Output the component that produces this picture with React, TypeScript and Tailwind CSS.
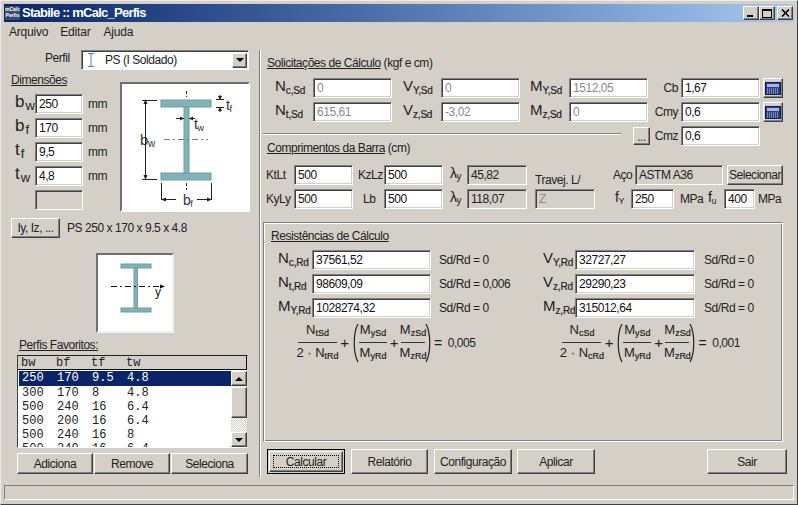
import React from "react";

const raised = "border border-t-white border-l-white border-r-[#404040] border-b-[#404040] shadow-[inset_-1px_-1px_0_#808080] bg-[#d4d0c8]";

function Field({ w, v = "", kind = "edit" }: { w: string; v?: string; kind?: "edit" | "off" | "ro" | "grey" }) {
  const tone =
    kind === "edit" ? "bg-white text-[#111]" :
    kind === "off" ? "bg-white text-[#8a8a8a]" :
    kind === "grey" ? "bg-[#d4d0c8] text-[#8a8a8a]" :
    "bg-[#d4d0c8] text-[#222]";
  return (
    <div className={`${w} h-[20px] shrink-0 border border-t-[#808080] border-l-[#808080] border-r-white border-b-white shadow-[inset_1px_1px_0_#404040,inset_-1px_-1px_0_#d4d0c8] pl-[3px] leading-[18px] overflow-hidden whitespace-nowrap ${tone}`}>
      {v}
    </div>
  );
}

function Btn({ w, h = "h-[25px]", children }: { w: string; h?: string; children: React.ReactNode }) {
  return <div className={`${w} ${h} ${raised} shrink-0 flex items-center justify-center whitespace-nowrap`}>{children}</div>;
}

function Q({ b, s }: { b: string; s: string }) {
  return (
    <span className="whitespace-nowrap text-[#222] tracking-normal">
      <span className="text-[15px] tracking-[-1px]">{b}</span>
      <span className="text-[10px] tracking-[-0.2px] text-[#222] align-[-3px] ml-[1px] [-webkit-text-stroke:0.2px_#222]">{s}</span>
    </span>
  );
}

function Dim({ b, s, v }: { b: string; s: string; v: string }) {
  return (
    <div className="flex items-center h-[20px] mb-[4px]">
      <div className="w-[31px] pl-[11px] whitespace-nowrap text-[#222] tracking-normal">
        <span className="text-[17px]">{b}</span>
        <span className="text-[13px] align-[-3px] ml-[1px]">{s}</span>
      </div>
      <Field w="w-[48px]" v={v} />
      <span className="ml-[5px]">mm</span>
    </div>
  );
}

function MainBeam() {
  return (
    <svg width="126" height="126" viewBox="122 84 126 126" className="block">
      <rect x="161" y="100" width="50" height="7" fill="#7fb3b8" stroke="#6f9ea2" />
      <rect x="161" y="173" width="50" height="7" fill="#7fb3b8" stroke="#6f9ea2" />
      <rect x="184" y="107" width="5" height="66" fill="#7fb3b8" stroke="#6f9ea2" />
      <g stroke="#222" strokeWidth="1" fill="none">
        <path d="M186.5 91v6M186.5 183v7" strokeDasharray="3 2" />
        <path d="M164 139.5h44" stroke="#777" strokeDasharray="6 3 2 3" />
        <path d="M142 100.5h15M142 179.5h15M145.5 101v78" />
        <path d="M216 99.5h8M216 107.5h8M220 95v4M220 108v4" />
        <path d="M176 118.5h8M189 118.5h6" />
        <path d="M161.5 183v17M211.5 183v17M162 199.5h14M197 199.5h14" />
      </g>
      <g fill="#222">
        <path d="M145.5 99l-2 5h4zM145.5 180l-2-5h4zM220 100l-2-4h4zM220 107l-2 4h4zM184 118.5l-4-2v4zM189 118.5l4-2v4zM161 199.5l5-2v4zM212 199.5l-5-2v4z" />
      </g>
      <text x="140" y="145" fontSize="15" fill="#333" fontFamily="Liberation Sans">b<tspan fontSize="10" dy="2">w</tspan></text>
      <text x="226" y="110" fontSize="14" fill="#333" fontFamily="Liberation Sans">t<tspan fontSize="9" dy="2">f</tspan></text>
      <text x="194" y="129" fontSize="14" fill="#333" fontFamily="Liberation Sans">t<tspan fontSize="9" dy="2">w</tspan></text>
      <text x="183" y="205" fontSize="14" fill="#333" fontFamily="Liberation Sans">b<tspan fontSize="9" dy="2">f</tspan></text>
    </svg>
  );
}

function SmallBeam() {
  return (
    <svg width="74" height="76" viewBox="98 255 74 76" className="block">
      <rect x="121" y="264" width="30" height="4" fill="#7fb3b8" stroke="#6f9ea2" />
      <rect x="121" y="308" width="30" height="4" fill="#7fb3b8" stroke="#6f9ea2" />
      <rect x="134" y="268" width="3.5" height="40" fill="#7fb3b8" stroke="#6f9ea2" />
      <path d="M111 286.5h51" stroke="#111" strokeDasharray="6 3 2 3" />
      <path d="M165 286.5l-5-2v4z" fill="#111" />
      <text x="155" y="296" fontSize="12" fill="#222" fontFamily="Liberation Sans">y</text>
    </svg>
  );
}

function CalcIcon() {
  return (
    <div className={`w-[20px] h-[20px] ml-[3px] shrink-0 ${raised} flex items-center justify-center`}>
      <svg width="16" height="13" viewBox="0 0 16 13">
        <rect x="0.5" y="0.5" width="15" height="12" fill="#27408b" stroke="#111a55" />
        <rect x="2" y="2" width="12" height="3" fill="#a9b4d8" />
        <path d="M2 7h12M2 9h12M2 11h12" stroke="#c4c8d4" strokeDasharray="1 1" />
      </svg>
    </div>
  );
}

function Frac({ t, b, w }: { t: React.ReactNode; b: React.ReactNode; w: string }) {
  return (
    <div className={`${w} shrink-0 flex flex-col items-center`}>
      <div className="h-[20px] flex items-end leading-[18px] border-b border-[#333] w-full justify-center whitespace-nowrap">{t}</div>
      <div className="h-[20px] leading-[20px] whitespace-nowrap">{b}</div>
    </div>
  );
}

function F({ b, s }: { b: string; s: string }) {
  return (
    <span className="text-[#222] tracking-normal">
      <span className="text-[13px]">{b}</span>
      <span className="text-[9px] align-[-2px] [-webkit-text-stroke:0.2px_#222]">{s}</span>
    </span>
  );
}

function Paren({ flip = false }: { flip?: boolean }) {
  return (
    <svg width="7" height="40" viewBox="0 0 7 40" className={`shrink-0 ${flip ? "-scale-x-100" : ""}`}>
      <path d="M6 1C1 10 1 30 6 39" fill="none" stroke="#222" strokeWidth="1.2" />
    </svg>
  );
}

function Formula({ n, value, box }: { n: string; value: string; box: string }) {
  return (
    <div className={`flex items-center h-[40px] ${box} text-[13px]`}>
      <Frac w="w-[39px]" t={<F b="N" s={`${n}Sd`} />} b={<span className="text-[13px] tracking-normal">2 · <F b="N" s={`${n}Rd`} /></span>} />
      <span className="w-[15px] text-center text-[15px]">+</span>
      <Paren />
      <Frac w="w-[28px]" t={<F b="M" s="ySd" />} b={<F b="M" s="yRd" />} />
      <span className="w-[14px] text-center text-[15px]">+</span>
      <Frac w="w-[24px]" t={<F b="M" s="zSd" />} b={<F b="M" s="zRd" />} />
      <Paren flip />
      <span className="ml-[2px] text-[14px]">=</span>
      <span className="ml-[6px] text-[12px]">{value}</span>
    </div>
  );
}

function ResRow({ l1, s1, v1, r1, l2, s2, v2 }: { l1: string; s1: string; v1: string; r1: string; l2: string; s2: string; v2: string }) {
  return (
    <div className="flex items-center h-[20px] mb-[4px]">
      <div className="w-[47px] pl-[13px]"><Q b={l1} s={s1} /></div>
      <Field w="w-[119px]" v={v1} />
      <div className="w-[104px] pl-[8px]">{r1}</div>
      <div className="w-[40px] pl-[8px]"><Q b={l2} s={s2} /></div>
      <Field w="w-[120px]" v={v2} />
      <div className="pl-[9px]">Sd/Rd = 0</div>
    </div>
  );
}

const rows = [
  ["250", "170", "9.5", "4.8"],
  ["300", "170", "8", "4.8"],
  ["500", "240", "16", "6.4"],
  ["500", "200", "16", "6.4"],
  ["500", "240", "16", "8"],
  ["500", "240", "16", "6.4"],
];

function Cols({ r }: { r: string[] }) {
  return (
    <>
      {r.map((c, i) => (
        <span key={i} className="w-[35px] shrink-0">{c}</span>
      ))}
    </>
  );
}

function ScrollBtn({ up }: { up?: boolean }) {
  return (
    <div className={`h-[15px] ${raised} flex items-center justify-center`}>
      <div className={`w-0 h-0 border-x-[4px] border-x-transparent ${up ? "border-b-[4px] border-b-black" : "border-t-[4px] border-t-black"}`} />
    </div>
  );
}

function Caption({ kind }: { kind: "min" | "max" | "close" }) {
  return (
    <div className={`w-[16px] h-[14px] ${raised} relative flex items-center justify-center`}>
      {kind === "min" && <div className="w-[6px] h-[2px] bg-black mt-[6px] -ml-[2px]" />}
      {kind === "max" && <div className="w-[10px] h-[9px] border border-black border-t-2" />}
      {kind === "close" && (
        <svg width="9" height="8" viewBox="0 0 9 8"><path d="M1 0.5L8 7.5M8 0.5L1 7.5" stroke="#000" strokeWidth="1.6" /></svg>
      )}
    </div>
  );
}

export default function App() {
  return (
    <div className="w-[798px] h-[505px] flex flex-col overflow-hidden bg-[#d4d0c8] border border-t-[#ececec] border-l-[#ececec] border-r-[#404040] border-b-[#404040] p-[3px] text-[12px] tracking-[-0.45px] leading-[14px] text-[#222] font-['Liberation_Sans',Arial,sans-serif]">
      {/* title */}
      <div className="h-[18px] shrink-0 flex items-center pl-[1px] pr-[1px] bg-gradient-to-r from-[#0a246a] to-[#a6caf0]">
        <div className="w-[15px] h-[14px] bg-[#3a4a6a] text-white text-[5px] leading-[6px] font-bold text-center overflow-hidden tracking-normal">mCalc<br />Perfis</div>
        <span className="ml-[2px] text-white font-bold text-[13px] tracking-[-0.75px]">Stabile :: mCalc_Perfis</span>
        <div className="ml-auto flex">
          <Caption kind="min" />
          <Caption kind="max" />
          <div className="w-[2px]" />
          <Caption kind="close" />
        </div>
      </div>
      {/* menu */}
      <div className="h-[19px] shrink-0 flex items-center text-[12px] tracking-[-0.2px] pl-[5px]">
        <span>Arquivo</span>
        <span className="ml-[12px]">Editar</span>
        <span className="ml-[13px]">Ajuda</span>
      </div>

      {/* body */}
      <div className="flex h-[444px] shrink-0">
        {/* left */}
        <div className="w-[255px] shrink-0 flex flex-col">
          <div className="flex items-center h-[20px] mt-[9px]">
            <span className="ml-[41px] w-[36px] -mt-[4px]">Perfil</span>
            <div className="w-[168px] h-[20px] flex items-center bg-white border border-t-[#808080] border-l-[#808080] border-r-white border-b-white shadow-[inset_1px_1px_0_#404040] pr-[1px]">
              <svg width="10" height="16" viewBox="0 0 10 16" className="ml-[4px]"><path d="M2 1.5h6M5 1.5v13M2 14.5h6" stroke="#2a8fc4" strokeWidth="1" fill="none" /></svg>
              <span className="ml-[9px]">PS (I Soldado)</span>
              <div className={`ml-auto w-[15px] h-[15px] ${raised} flex items-center justify-center`}>
                <div className="w-0 h-0 border-x-[4px] border-x-transparent border-t-[4px] border-t-black" />
              </div>
            </div>
          </div>

          <div className="flex">
            <div className="w-[116px] shrink-0">
              <div className="h-[24px] pl-[7px] pt-[3px]"><span className="underline">Dimensões</span></div>
              <Dim b="b" s="w" v="250" />
              <Dim b="b" s="f" v="170" />
              <Dim b="t" s="f" v="9,5" />
              <Dim b="t" s="w" v="4,8" />
              <div className="flex h-[20px]">
                <div className="w-[31px]" />
                <div className="w-[48px] h-[20px] border border-t-[#808080] border-l-[#808080] border-r-white border-b-white shadow-[inset_1px_1px_0_#404040]" />
              </div>
            </div>
            <div className="mt-[12px] w-[130px] h-[130px] bg-white border-2 border-t-[#707070] border-l-[#707070] border-r-white border-b-white">
              <MainBeam />
            </div>
          </div>

          <div className="flex items-center mt-[6px] ml-[7px]">
            <Btn w="w-[49px]" h="h-[20px]">Iy, Iz, ...</Btn>
            <span className="ml-[7px]">PS 250 x 170 x 9.5 x 4.8</span>
          </div>

          <div className="mt-[15px] ml-[92px] w-[78px] h-[80px] bg-white border-2 border-t-[#707070] border-l-[#707070] border-r-[#f0f0f0] border-b-[#f0f0f0]">
            <SmallBeam />
          </div>

          <div className="mt-[5px] ml-[15px] h-[14px]"><span className="underline">Perfis Favoritos:</span></div>

          <div className="mt-[3px] ml-[13px] w-[231px] h-[93px] flex flex-col font-['Liberation_Mono',monospace] text-[12px] tracking-normal leading-[14px] border border-t-[#222] border-l-[#404040] border-r-[#d4d0c8] border-b-white">
            <div className="h-[14px] shrink-0 flex pl-[3px] border-b border-[#111] border-r border-r-[#111]">
              <Cols r={["bw", "bf", "tf", "tw"]} />
            </div>
            <div className="flex flex-1 min-h-0 bg-white pt-[1px] pl-[1px]">
              <div className="w-[212px] overflow-hidden">
                {rows.map((r, i) => (
                  <div key={i} className={`h-[14px] pl-[3px] flex ${i === 0 ? "bg-[#0a246a] text-white h-[15px] leading-[15px]" : "text-[#222]"}`}>
                    <Cols r={r} />
                  </div>
                ))}
              </div>
              <div className="w-[16px] flex flex-col shrink-0 bg-[repeating-conic-gradient(#ffffff_0_25%,#d4d0c8_0_50%)] bg-[length:2px_2px]">
                <ScrollBtn up />
                <div className={`h-[31px] mt-[1px] ${raised}`} />
                <div className="flex-1" />
                <ScrollBtn />
              </div>
            </div>
          </div>

          <div className="flex mt-[5px] ml-[13px] gap-[1px]">
            <Btn w="w-[76px]" h="h-[21px]">Adiciona</Btn>
            <Btn w="w-[76px]" h="h-[21px]">Remove</Btn>
            <Btn w="w-[77px]" h="h-[21px]">Seleciona</Btn>
          </div>
        </div>

        {/* right */}
        <div className="mt-[9px] h-[427px] w-[535px] shrink-0 border-l border-l-[#808080] shadow-[inset_1px_0_0_#ffffff] relative">
          <div className="pl-[7px] pt-[6px] h-[28px]">
            <span className="underline">Solicitações de Cálculo</span> (kgf e cm)
          </div>

          <div className="flex items-center h-[20px]">
            <div className="w-[53px] pl-[15px]"><Q b="N" s="c,Sd" /></div>
            <Field w="w-[79px]" v="0" kind="off" />
            <div className="w-[49px] pl-[11px]"><Q b="V" s="Y,Sd" /></div>
            <Field w="w-[79px]" v="0" kind="off" />
            <div className="w-[49px] pl-[10px]"><Q b="M" s="Y,Sd" /></div>
            <Field w="w-[79px]" v="1512,05" kind="off" />
            <div className="w-[33px] pr-[3px] text-right">Cb</div>
            <Field w="w-[79px]" v="1,67" />
            <CalcIcon />
          </div>
          <div className="flex items-center h-[20px] mt-[4px]">
            <div className="w-[53px] pl-[15px]"><Q b="N" s="t,Sd" /></div>
            <Field w="w-[79px]" v="615,61" kind="off" />
            <div className="w-[49px] pl-[11px]"><Q b="V" s="z,Sd" /></div>
            <Field w="w-[79px]" v="-3,02" kind="off" />
            <div className="w-[49px] pl-[10px]"><Q b="M" s="z,Sd" /></div>
            <Field w="w-[79px]" v="0" kind="off" />
            <div className="w-[33px] pr-[3px] text-right">Cmy</div>
            <Field w="w-[79px]" v="0,6" />
            <CalcIcon />
          </div>

          <div className="flex items-start mt-[4px] h-[29px]">
            <div className="w-[373px] shrink-0">
              <div className="mt-[7px] ml-[3px] w-[358px] h-[2px] border-t border-t-[#808080] border-b border-b-white" />
              <div className="mt-[6px] pl-[7px]"><span className="underline">Comprimentos da Barra</span> (cm)</div>
            </div>
            <div className={`w-[17px] h-[18px] mt-[1px] ${raised} flex items-end justify-center leading-[14px]`}>...</div>
            <div className="w-[31px] pr-[3px] text-right h-[20px] leading-[20px]">Cmz</div>
            <Field w="w-[79px]" v="0,6" />
          </div>

          <div className="flex items-center h-[20px] mt-[10px]">
            <div className="w-[34px] pl-[6px]">KtLt</div>
            <Field w="w-[59px]" v="500" />
            <div className="w-[31px] pl-[5px]">KzLz</div>
            <Field w="w-[59px]" v="500" />
            <div className="w-[24px] pl-[7px]"><span className="text-[14px]">λ</span><span className="text-[10px] align-[-2px]">y</span></div>
            <Field w="w-[60px]" v="45,82" kind="ro" />
            <div className="w-[60px] ml-[8px] h-[20px] pt-[8px] whitespace-nowrap">Travej. L/</div>
            <div className="w-[40px] pl-[18px]">Aço</div>
            <Field w="w-[88px]" v="ASTM A36" kind="ro" />
            <div className="ml-[4px]"><Btn w="w-[56px]" h="h-[20px]">Selecionar</Btn></div>
          </div>
          <div className="flex items-center h-[20px] mt-[4px]">
            <div className="w-[34px] pl-[6px]">KyLy</div>
            <Field w="w-[59px]" v="500" />
            <div className="w-[31px] pl-[10px]">Lb</div>
            <Field w="w-[59px]" v="500" />
            <div className="w-[24px] pl-[7px]"><span className="text-[14px]">λ</span><span className="text-[10px] align-[-2px]">y</span></div>
            <Field w="w-[60px]" v="118,07" kind="ro" />
            <div className="ml-[8px]"><Field w="w-[60px]" v="Z" kind="grey" /></div>
            <div className="w-[36px] pl-[20px]"><span className="text-[14px]">f</span><span className="text-[9px] align-[-2px]">Y</span></div>
            <Field w="w-[43px]" v="250" />
            <div className="w-[30px] pl-[6px]">MPa</div>
            <div className="w-[20px] pl-[4px]"><span className="text-[14px]">f</span><span className="text-[9px] align-[-2px]">u</span></div>
            <Field w="w-[31px]" v="400" />
            <div className="pl-[3px]">MPa</div>
          </div>

          <div className="mt-[13px] ml-[3px] w-[520px] h-[220px] border border-t-[#808080] border-l-[#808080] border-r-white border-b-white shadow-[inset_1px_1px_0_#ffffff,inset_-1px_-1px_0_#808080] pl-[1px] pt-[1px]">
            <div className="pl-[6px] mt-[5px] h-[14px]"><span className="underline">Resistências de Cálculo</span></div>
            <div className="mt-[7px]">
              <ResRow l1="N" s1="c,Rd" v1="37561,52" r1="Sd/Rd = 0" l2="V" s2="Y,Rd" v2="32727,27" />
              <ResRow l1="N" s1="t,Rd" v1="98609,09" r1="Sd/Rd = 0,006" l2="V" s2="z,Rd" v2="29290,23" />
              <ResRow l1="M" s1="Y,Rd" v1="1028274,32" r1="Sd/Rd = 0" l2="M" s2="z,Rd" v2="315012,64" />
            </div>
            <div className="flex mt-[5px]">
              <Formula n="t" value="0,005" box="w-[298px] pl-[33px]" />
              <Formula n="c" value="0,001" box="w-[220px]" />
            </div>
          </div>

          <div className="flex mt-[7px] ml-[7px]">
            <div className="w-[78px] h-[25px] shrink-0 border border-black p-[1px]">
              <div className={`w-full h-full ${raised} flex items-center justify-center p-[3px]`}>
                <div className="w-full h-full border border-dotted border-black flex items-center justify-center">Calcular</div>
              </div>
            </div>
            <div className="ml-[6px]"><Btn w="w-[77px]">Relatório</Btn></div>
            <div className="ml-[6px]"><Btn w="w-[78px]">Configuração</Btn></div>
            <div className="ml-[5px]"><Btn w="w-[78px]">Aplicar</Btn></div>
            <div className="ml-[112px]"><Btn w="w-[80px]">Sair</Btn></div>
          </div>
        </div>
      </div>

      {/* status */}
      <div className="h-[15px] shrink-0 border border-t-[#808080] border-l-[#808080] border-r-white border-b-white" />
    </div>
  );
}
